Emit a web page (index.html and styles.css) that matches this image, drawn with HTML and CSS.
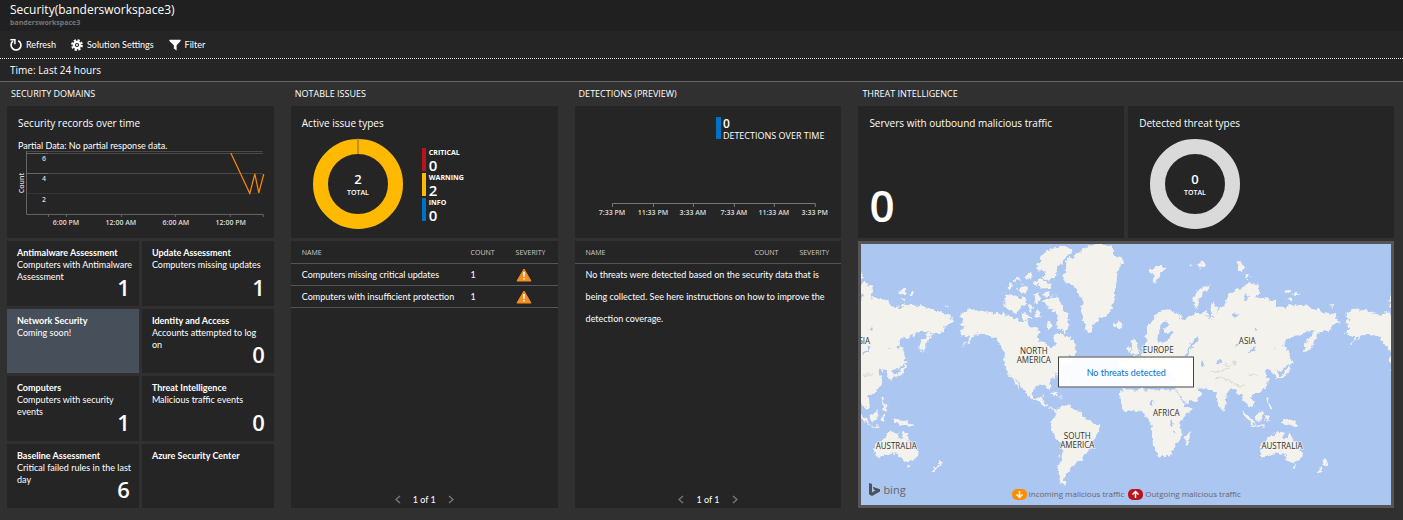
FILE: index.html
```html
<!DOCTYPE html>
<html lang="en">
<head>
<meta charset="utf-8">
<title>Security(bandersworkspace3)</title>
<link rel="stylesheet" href="styles.css">
</head>
<body>
<header class="blade-head">
  <h1 class="blade-title">Security(bandersworkspace3)</h1>
  <p class="blade-sub">bandersworkspace3</p>
</header>
<nav class="toolbar">
  <button class="tool" type="button">
    <svg class="tool-icon" viewBox="0 0 12 12" aria-hidden="true"><path d="M8.2 1.7A4.9 4.9 0 1 1 3 2.2" fill="none" stroke="#fff" stroke-width="1.7"/><path d="M0.3 0.8H4.9V5.2" fill="none" stroke="#fff" stroke-width="1.5"/></svg>
    Refresh
  </button>
  <button class="tool" type="button">
    <svg class="tool-icon" viewBox="0 0 12 12" aria-hidden="true"><circle cx="6" cy="6" r="4.9" fill="none" stroke="#fff" stroke-width="2" stroke-dasharray="2.2 1.65"/><circle cx="6" cy="6" r="3.2" fill="none" stroke="#fff" stroke-width="2.2"/><circle cx="6" cy="6" r="1" fill="#fff"/></svg>
    Solution Settings
  </button>
  <button class="tool" type="button">
    <svg class="tool-icon" viewBox="0 0 12 12" aria-hidden="true"><path d="M0.4 0.8H11.6V2L7.6 6.2V11.4L4.8 9.6V6.2L0.4 2Z" fill="#fff"/></svg>
    Filter
  </button>
</nav>
<div class="timebar">Time: Last 24 hours</div>

<main class="board">
  <section class="col">
    <h2 class="col-title">SECURITY DOMAINS</h2>
    <div class="card">
      <h3 class="card-title">Security records over time</h3>
      <p class="note">Partial Data: No partial response data.</p>
      <svg class="chart" viewBox="0 0 267 80" role="img" aria-label="Security records over time">
        <g fill="none" stroke="#4a4a4a">
          <path d="M19 1.5H256M19 3.5H256M19 23.5H256"/>
          <path d="M19 43.5H256" stroke="#363636"/>
          <path d="M19 3.5H41M19 23.5H41" stroke="#666"/>
          <path d="M19.500 1V64.500H256.500V67M41.500 64V67M59.500 64V67M114.500 64V67M168.500 64V67M223.500 64V67" stroke="#666"/>
          <path d="M224 3L243 43.500L248 24L252 43L257 24" stroke="#ff8c00" stroke-width="1.2"/>
        </g>
        <g class="axis" text-anchor="middle">
          <text x="37" y="11">6</text><text x="37" y="31">4</text><text x="37" y="52">2</text>
          <text x="59" y="75">6:00 PM</text><text x="114" y="75">12:00 AM</text><text x="169" y="75">6:00 AM</text><text x="224" y="75">12:00 PM</text>
          <text transform="translate(17 33) rotate(-90)">Count</text>
        </g>
      </svg>
    </div>
    <div class="tiles">
      <a class="tile" href="#"><span class="tile-text"><b>Antimalware Assessment</b>Computers with Antimalware Assessment</span><span class="tile-num">1</span></a>
      <a class="tile" href="#"><span class="tile-text"><b>Update Assessment</b>Computers missing updates</span><span class="tile-num">1</span></a>
      <a class="tile tile-on" href="#"><span class="tile-text"><b>Network Security</b>Coming soon!</span></a>
      <a class="tile" href="#"><span class="tile-text"><b>Identity and Access</b>Accounts attempted to log<br>on</span><span class="tile-num">0</span></a>
      <a class="tile" href="#"><span class="tile-text"><b>Computers</b>Computers with security<br>events</span><span class="tile-num">1</span></a>
      <a class="tile" href="#"><span class="tile-text"><b>Threat Intelligence</b>Malicious traffic events</span><span class="tile-num">0</span></a>
      <a class="tile" href="#"><span class="tile-text"><b>Baseline Assessment</b>Critical failed rules in the last<br>day</span><span class="tile-num">6</span></a>
      <a class="tile" href="#"><span class="tile-text"><b>Azure Security Center</b></span></a>
    </div>
  </section>

  <section class="col">
    <h2 class="col-title">NOTABLE ISSUES</h2>
    <div class="card">
      <h3 class="card-title">Active issue types</h3>
      <div class="donut-row">
        <svg class="donut" viewBox="0 0 92 92" role="img" aria-label="2 total">
          <circle cx="46" cy="46" r="37.500" fill="none" stroke="#ffb900" stroke-width="15"/>
          <path d="M46 0V16" stroke="#7a6a3a"/>
          <text class="donut-num" x="46" y="46">2</text><text class="donut-cap" x="46" y="57">TOTAL</text>
        </svg>
        <ul class="legend">
          <li class="key key-red">CRITICAL<b>0</b></li>
          <li class="key key-yellow">WARNING<b>2</b></li>
          <li class="key key-blue">INFO<b>0</b></li>
        </ul>
      </div>
    </div>
    <div class="panel">
      <table class="list">
        <thead><tr><th>NAME</th><th class="c-count">COUNT</th><th class="c-sev">SEVERITY</th></tr></thead>
        <tbody>
          <tr><td>Computers missing critical updates</td><td>1</td><td><svg class="warn" viewBox="0 0 16 14" role="img" aria-label="Warning"><path d="M8 1L15 13H1Z" fill="#f78d1e" stroke="#f78d1e" stroke-linejoin="round"/><path d="M7 4H9L8.600 9H7.400ZM7.200 10H8.800V11.600H7.200Z" fill="#fff"/></svg></td></tr>
          <tr><td>Computers with insufficient protection</td><td>1</td><td><svg class="warn" viewBox="0 0 16 14" role="img" aria-label="Warning"><path d="M8 1L15 13H1Z" fill="#f78d1e" stroke="#f78d1e" stroke-linejoin="round"/><path d="M7 4H9L8.600 9H7.400ZM7.200 10H8.800V11.600H7.200Z" fill="#fff"/></svg></td></tr>
        </tbody>
      </table>
      <div class="pager">
        <button type="button" aria-label="Previous page"><svg viewBox="0 0 6 9"><path d="M5 1L1 4.500L5 8" fill="none" stroke="#777" stroke-width="1.400"/></svg></button>
        <span>1 of 1</span>
        <button type="button" aria-label="Next page"><svg viewBox="0 0 6 9"><path d="M1 1L5 4.500L1 8" fill="none" stroke="#777" stroke-width="1.400"/></svg></button>
      </div>
    </div>
  </section>

  <section class="col">
    <h2 class="col-title">DETECTIONS (PREVIEW)</h2>
    <div class="card card-detect">
      <div class="detect-key"><b>0</b>DETECTIONS OVER TIME</div>
      <svg class="chart" viewBox="0 0 267 39" role="img" aria-label="Detections over time">
        <path d="M37.500 8V4.500H240.500V8M78.500 4V8M118.500 4V8M159.500 4V8M199.500 4V8" fill="none" stroke="#777b80"/>
        <g class="axis" text-anchor="middle">
          <text x="37" y="16">7:33 PM</text><text x="78" y="16">11:33 PM</text><text x="118" y="16">3:33 AM</text><text x="159" y="16">7:33 AM</text><text x="199" y="16">11:33 AM</text><text x="240" y="16">3:33 PM</text>
        </g>
      </svg>
    </div>
    <div class="panel">
      <table class="list">
        <thead><tr><th>NAME</th><th class="c-count">COUNT</th><th class="c-sev">SEVERITY</th></tr></thead>
      </table>
      <p class="empty">No threats were detected based on the security data that is being collected. See here instructions on how to improve the detection coverage.</p>
      <div class="pager">
        <button type="button" aria-label="Previous page"><svg viewBox="0 0 6 9"><path d="M5 1L1 4.500L5 8" fill="none" stroke="#777" stroke-width="1.400"/></svg></button>
        <span>1 of 1</span>
        <button type="button" aria-label="Next page"><svg viewBox="0 0 6 9"><path d="M1 1L5 4.500L1 8" fill="none" stroke="#777" stroke-width="1.400"/></svg></button>
      </div>
    </div>
  </section>

  <section class="col">
    <h2 class="col-title">THREAT INTELLIGENCE</h2>
    <div class="pair">
      <div class="card">
        <h3 class="card-title">Servers with outbound malicious traffic</h3>
        <p class="big">0</p>
      </div>
      <div class="card">
        <h3 class="card-title">Detected threat types</h3>
        <div class="donut-row">
          <svg class="donut" viewBox="0 0 92 92" role="img" aria-label="0 total">
            <circle cx="46" cy="46" r="37.500" fill="none" stroke="#dadada" stroke-width="15"/>
            <text class="donut-num" x="46" y="46">0</text><text class="donut-cap" x="46" y="57">TOTAL</text>
          </svg>
        </div>
      </div>
    </div>
    <div class="map">
      <svg class="world" viewBox="18 27 1590 780" preserveAspectRatio="xMidYMid slice" role="img" aria-label="World map">
        <defs>
          <filter id="coast" x="-5%" y="-5%" width="110%" height="110%">
            <feTurbulence type="fractalNoise" baseFrequency="0.06" numOctaves="3" seed="4" result="n"/>
            <feDisplacementMap in="SourceGraphic" in2="n" scale="22" xChannelSelector="R" yChannelSelector="G"/>
          </filter>
          <g id="west">
            <path d="M318 238L345 220L360 226L378 224L400 232L430 236L448 230L455 240L475 245L490 255L520 258L530 270L522 282L545 275L556 290L548 303L555 318L575 325L592 340L602 328L596 305L606 290L625 290L632 305L645 302L655 320L668 345L662 358L640 362L655 372L648 382L630 385L612 395L604 412L600 430L584 443L590 463L582 462L574 447L555 447L538 458L534 480L548 492L556 482L568 480L564 496L578 500L580 512L596 520L610 518L604 526L590 520L572 510L548 497L525 487L512 468L494 448L482 428L490 450L500 466L492 462L474 430L456 405L450 372L452 350L440 330L430 318L415 305L390 297L372 294L355 308L322 336L350 306L330 302L318 290L332 276L316 266L330 254Z"/>
            <path d="M612 516L640 511L658 520L680 530L688 548L702 556L733 566L737 575L724 598L716 612L710 640L690 655L682 672L665 678L660 692L645 697L640 710L630 722L632 738L634 750L620 745L612 728L614 690L620 650L620 625L604 610L590 570L593 552L606 536L604 522Z"/>
            <path d="M640 75L665 55L690 45L700 32L730 27L765 30L782 45L775 62L800 66L808 76L795 95L788 110L785 150L776 168L780 190L768 205L775 218L755 240L732 248L715 270L705 294L692 282L685 250L678 225L688 200L672 175L660 152L634 140L618 128L640 104L630 88Z"/>
            <path d="M545 100L560 62L590 40L622 32L654 45L645 62L625 76L608 102L604 126L584 138L566 130L578 112L562 112Z"/>
            <path d="M450 190L458 176L480 180L505 188L518 205L500 215L486 236L464 228L450 212Z"/>
            <path d="M560 195L584 190L600 184L614 196L628 222L644 240L640 258L648 270L636 276L638 292L618 284L602 268L612 245L592 222L574 214Z"/>
            <path d="M456 156L470 144L482 152L470 166ZM490 165L502 150L520 156L518 172L498 178ZM512 122L530 112L532 126L516 134ZM540 140L556 132L588 146L590 158L560 160ZM535 180L548 170L560 186L548 204L536 196ZM568 170L590 168L588 182L570 184ZM524 205L536 212L530 230L518 220ZM545 225L562 232L556 250L540 244ZM570 268L586 256L598 272L582 284ZM500 232L520 236L535 250L512 254ZM778 268L794 258L804 266L796 278L784 278ZM584 470L604 472L614 482L598 480ZM616 482L626 484L624 488L614 486ZM480 134L494 124L498 134L486 140Z"/>
          </g>
          <g id="east">
            <path d="M60 362L70 330L78 318L75 290L90 262L112 235L136 222L164 228L185 246L182 258L200 248L215 240L235 236L250 228L268 240L276 256L272 212L280 198L288 212L290 232L298 214L312 210L324 185L345 165L372 158L385 142L412 152L414 176L404 186L430 190L465 196L468 214L500 215L510 204L530 212L550 208L580 222L610 230L640 236L657 262L640 268L626 286L605 290L586 302L576 322L568 345L554 350L553 325L572 302L582 288L556 290L538 302L510 306L492 318L488 334L505 344L512 368L500 392L482 406L472 402L478 420L470 432L460 424L456 408L442 402L434 408L442 430L440 450L424 470L405 475L392 482L402 500L404 512L390 518L376 498L366 480L350 472L344 460L330 462L320 482L314 502L305 520L295 505L288 482L280 464L262 458L224 460L240 468L243 480L225 495L195 503L184 485L168 462L150 440L60 420L0 400L-10 380L40 368Z"/>
            <path d="M5 462L166 462L184 490L194 512L216 512L205 532L186 555L178 575L184 592L180 612L166 630L156 650L140 660L115 663L106 642L95 612L98 590L90 562L78 542L68 528L45 522L18 530L4 510L1 486Z"/>
            <path d="M26 356L36 344L36 315L46 314L52 334L58 350L44 358ZM22 338L32 332L32 346L22 350ZM222 216L220 190L238 164L254 154L272 149L268 158L248 172L236 196L234 218ZM90 105L108 96L136 96L140 104L122 110L118 124L106 146L96 136L98 118ZM348 80L358 74L372 98L370 112L352 104L356 92ZM372 118L384 118L388 128L376 130ZM205 90L216 84L214 94ZM232 88L246 80L258 86L250 96L236 100ZM492 166L512 164L516 176L500 178ZM522 172L532 170L536 178L526 180ZM500 190L512 188L512 196ZM626 214L638 212L636 218Z"/>
            <path d="M502 376L516 374L520 384L504 388ZM508 388L510 404L498 420L480 428L470 426L490 414L500 400ZM438 486L446 484L446 500L454 514L456 526L446 522L446 508ZM362 524L376 532L392 550L402 564L394 566L376 548ZM396 566L432 570L428 575L400 571ZM404 546L414 532L428 526L432 540L424 556L410 558ZM438 542L450 538L444 550L448 560L438 556ZM474 554L496 550L520 558L536 574L512 572L498 564L480 562Z"/>
            <path d="M418 632L446 610L462 592L476 588L492 592L488 604L500 612L507 584L514 594L520 614L538 634L548 652L540 672L520 680L502 672L492 656L470 650L446 658L426 663L420 650ZM516 690L526 690L524 698L518 698ZM612 668L624 680L616 690L606 692L598 712L588 710L602 692L612 682ZM192 608L206 592L212 586L212 604L202 628L194 626ZM304 508L312 516L308 524Z"/>
            <g fill="#abc7f1">
              <path d="M118 322L114 298L122 276L138 258L146 262L132 282L134 296L152 290L166 292L148 300L142 316L128 322ZM344 330L350 326L350 336ZM240 380L252 374L250 396L240 392ZM290 380L304 376L306 382L292 386ZM404 280L412 276L414 288L406 290ZM400 330L407 334L402 346L386 356L382 352L396 344ZM460 334L470 336L462 340ZM92 498L104 496L102 506L94 508ZM156 552L162 550L158 570L146 572ZM164 578L167 578L168 596L165 594ZM222 312L236 304L234 318L216 336L200 364L194 360L210 332ZM332 236L352 234L350 242L336 244ZM70 405L160 405L165 435L150 440L60 428ZM366 190L382 176L388 182L376 192Z"/>
            </g>
            <path d="M285 430L310 424L330 440L350 452L375 448M270 410L300 408L330 396M310 390L350 380M385 420L410 418" fill="none" stroke="#dcdcd6" stroke-width="4"/>
          </g>
        </defs>
        <g filter="url(#coast)">
          <rect x="-30" y="-30" width="1700" height="900" fill="#abc7f1"/>
          <g fill="#f3f2ed">
            <use href="#west"/><use href="#west" x="1152"/>
            <use href="#east" x="795"/><use href="#east" x="-357"/>
          </g>
        </g>
        <g class="place">
          <text x="24" y="325">ASIA</text><text x="538" y="357">NORTH</text><text x="538" y="384">AMERICA</text>
          <text x="668" y="609">SOUTH</text><text x="668" y="636">AMERICA</text><text x="127" y="640">AUSTRALIA</text>
          <text x="910" y="352">EUROPE</text><text x="1176" y="325">ASIA</text><text x="934" y="541">AFRICA</text><text x="1280" y="640">AUSTRALIA</text>
        </g>
      </svg>
      <div class="map-message">No threats detected</div>
      <div class="map-foot">
        <span class="bing"><svg viewBox="0 0 11 13" aria-hidden="true"><path d="M0 0L3 1V9.500L6.500 7.300L4.800 6.500L3.700 3.800L11 6.300V8.600L3 13L0 11.200Z" fill="#4d5358"/></svg>bing</span>
        <span class="traffic"><svg viewBox="0 0 15 11" aria-hidden="true"><rect width="15" height="11" rx="5" fill="#ff8c00"/><path d="M7.500 2V8.500M4.500 5.500L7.500 8.500L10.500 5.500" fill="none" stroke="#fff" stroke-width="1.500"/></svg>Incoming malicious traffic</span>
        <span class="traffic"><svg viewBox="0 0 15 11" aria-hidden="true"><rect width="15" height="11" rx="5" fill="#ba141a"/><path d="M7.500 9V2.500M4.500 5.500L7.500 2.500L10.500 5.500" fill="none" stroke="#fff" stroke-width="1.500"/></svg>Outgoing malicious traffic</span>
      </div>
    </div>
  </section>
</main>
</body>
</html>
```
FILE: styles.css
```css
* { box-sizing: border-box; }
body {
  margin: 0;
  min-height: 100vh;
  display: flex;
  flex-direction: column;
  background: #303030;
  color: #fff;
  font-family: Lato, "Open Sans", sans-serif;
  font-size: 9px;
  line-height: 12px;
}
h1, h2, h3, p, ul { margin: 0; padding: 0; font-weight: 400; }
button { background: none; border: 0; padding: 0; color: inherit; font: inherit; }
.blade-head, .timebar, .col-title, .card-title, .axis, .tile-num, .donut-row, .detect-key, .big, .list th, .place, .map-foot {
  font-family: "Open Sans", "Noto Sans", sans-serif;
}

.blade-head { background: #202020; padding: 2px 10px; height: 31px; }
.blade-title { font-size: 12px; line-height: 16px; }
.blade-sub { font-size: 7px; line-height: 9px; font-weight: 700; color: #777; }
.toolbar {
  display: flex;
  gap: 15px;
  height: 27px;
  padding: 0 10px;
  background: #252525;
}
.tool { display: flex; align-items: center; gap: 4px; }
.tool-icon { width: 12px; height: 12px; }
.timebar {
  height: 24px;
  padding: 5px 10px;
  font-size: 10px;
  background: #252525;
  border-top: 1px dotted #fff;
  border-bottom: 1px solid #666;
}

.board {
  flex: 1;
  display: grid;
  grid-template-columns: 267fr 267fr 267fr 536fr;
  gap: 17px;
  padding: 5px 9px 12px 7px;
}
.col { display: flex; flex-direction: column; min-width: 0; gap: 3px; }
.col-title { font-size: 9px; line-height: 14px; padding-left: 4px; margin-bottom: 2px; }
.card { background: #252525; height: 132px; padding-top: 10px; overflow: hidden; }
.card-title { font-size: 10px; line-height: 14px; padding-left: 11px; }
.note { padding: 12px 0 0 11px; line-height: 8px; }
.chart { display: block; width: 100%; }
.axis text { fill: #ddd; font-size: 7px; font-weight: 600; }

.tiles {
  flex: 1;
  display: grid;
  grid-template-columns: 1fr 1fr;
  grid-auto-rows: 1fr;
  gap: 3px;
}
.tile {
  display: grid;
  background: #252525;
  color: #fff;
  text-decoration: none;
  padding: 6px 4px 8px 10px;
}
.tile-on { background: #474f5a; }
.tile-text, .tile-num { grid-area: 1 / 1; }
.tile-text b { display: block; }
.tile-num { place-self: end; margin-right: 5px; font-size: 22px; line-height: 22px; font-weight: 600; }

.donut-row { display: flex; gap: 18px; padding: 8px 0 0 21px; }
.donut { width: 92px; height: 92px; }
.donut text { fill: #fff; font-weight: 600; text-anchor: middle; }
.donut-num { font-size: 13px; }
.donut-cap { font-size: 7px; }
.legend { list-style: none; display: flex; flex-direction: column; gap: 2px; padding-top: 10px; }
.key { border-left: 4px solid; padding-left: 3px; height: 23px; font-size: 7px; line-height: 9px; font-weight: 700; }
.key b { display: block; color: #fff; font-size: 15px; line-height: 16px; font-weight: 600; }
.key-red { border-color: #ba141a; }
.key-yellow { border-color: #ffb900; }
.key-blue { border-color: #0072c6; }

.panel { flex: 1; display: flex; flex-direction: column; background: #252525; }
.list { width: 100%; table-layout: fixed; border-collapse: collapse; }
.list th, .list td { height: 22px; padding: 1px 0 0; text-align: left; border-bottom: 1px solid #555; }
.list th { padding-top: 3px; font-size: 7px; font-weight: 400; color: #ccc; }
.list th:first-child, .list td:first-child { padding-left: 11px; }
.c-count { width: 45px; }
.c-sev { width: 42px; }
.warn { display: block; width: 16px; height: 14px; }
.empty { padding: 0 12px 0 11px; line-height: 22px; }
.pager {
  margin-top: auto;
  display: flex;
  justify-content: center;
  align-items: center;
  gap: 12px;
  height: 17px;
}
.pager svg { display: block; width: 6px; height: 9px; }

.card-detect { display: flex; flex-direction: column; justify-content: space-between; padding-top: 11px; }
.detect-key {
  align-self: flex-end;
  margin-right: 17px;
  padding-left: 2px;
  border-left: 5px solid #0072c6;
  height: 22px;
  line-height: 10px;
}
.detect-key b { display: block; font-size: 12px; line-height: 14px; font-weight: 600; }

.pair { display: grid; grid-template-columns: 1fr 1fr; gap: 4px; }
.big { padding: 50px 0 0 11px; font-size: 44px; line-height: 50px; font-weight: 600; }
.map { position: relative; flex: 1; border: 3px solid #555; background: #abc7f1; overflow: hidden; }
.world { position: absolute; width: 100%; height: 100%; }
.place text { font-size: 24px; fill: #333; text-anchor: middle; paint-order: stroke; stroke: #f3f2ed; stroke-width: 4px; }
.map-message {
  position: absolute;
  left: 50%;
  top: 49%;
  transform: translate(-50%, -50%);
  width: 136px;
  line-height: 29px;
  border: 1px solid #444;
  background: rgba(255, 255, 255, 0.95);
  color: #0072c6;
  text-align: center;
}
.map-foot {
  position: absolute;
  left: 0;
  right: 0;
  bottom: 5px;
  display: flex;
  justify-content: center;
  gap: 4px;
  color: #666;
  font-size: 8px;
}
.bing { position: absolute; left: 8px; bottom: 3px; display: flex; gap: 3px; font-size: 11px; line-height: 14px; }
.bing svg { width: 11px; height: 13px; }
.traffic { display: flex; align-items: center; gap: 2px; }
.traffic svg { width: 15px; height: 11px; }
```
